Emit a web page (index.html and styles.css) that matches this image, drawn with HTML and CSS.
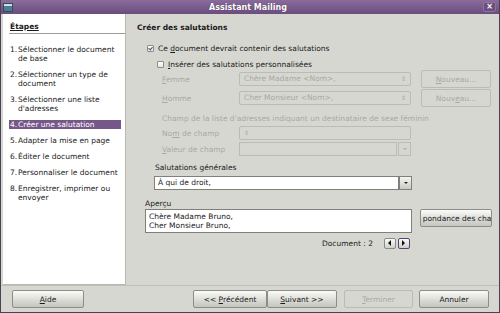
FILE: index.html
```html
<!DOCTYPE html>
<html lang="fr">
<head>
    <meta charset="UTF-8">
    <title>Assistant Mailing</title>
    <link rel="stylesheet" href="styles.css">
</head>
<body>
    <div class="window">
        <!-- Title bar -->
        <div class="titlebar">
            <span class="app-icon"></span>
            <span class="title">Assistant Mailing</span>
            <span class="close">×</span>
        </div>

        <div class="main">
            <!-- Steps -->
            <div class="steps">
                <div class="steps-title"><u>É</u>tapes</div>
                <ol class="step-list">
                    <li><span class="num">1.</span><span>Sélectionner le document de base</span></li>
                    <li><span class="num">2.</span><span>Sélectionner un type de document</span></li>
                    <li><span class="num">3.</span><span>Sélectionner une liste d'adresses</span></li>
                    <li class="active"><span class="num">4.</span><span>Créer une salutation</span></li>
                    <li><span class="num">5.</span><span>Adapter la mise en page</span></li>
                    <li><span class="num">6.</span><span>Éditer le document</span></li>
                    <li><span class="num">7.</span><span>Personnaliser le document</span></li>
                    <li><span class="num">8.</span><span>Enregistrer, imprimer ou envoyer</span></li>
                </ol>
            </div>

            <!-- Page content -->
            <div class="page">
                <h1>Créer des salutations</h1>

                <div class="check-row first">
                    <span class="check checked"></span>
                    <span>Ce <u>d</u>ocument devrait contenir des salutations</span>
                </div>
                <div class="check-row second">
                    <span class="check"></span>
                    <span><u>I</u>nsérer des salutations personnalisées</span>
                </div>

                <div class="field-row gender">
                    <span class="field-label"><u>F</u>emme</span>
                    <div class="combo disabled">Chère Madame &lt;Nom&gt;,<span class="spin">⇕</span></div>
                    <div class="btn disabled new-btn"><span><u>N</u>ouveau...</span></div>
                </div>
                <div class="field-row gender">
                    <span class="field-label"><u>H</u>omme</span>
                    <div class="combo disabled">Cher Monsieur &lt;Nom&gt;,<span class="spin">⇕</span></div>
                    <div class="btn disabled new-btn"><span>Nouv<u>e</u>au...</span></div>
                </div>

                <div class="hint">Champ de la liste d'adresses indiquant un destinataire de sexe féminin</div>

                <div class="field-row small">
                    <span class="field-label">No<u>m</u> de champ</span>
                    <div class="combo disabled"><span class="spin">⇕</span></div>
                </div>
                <div class="field-row small">
                    <span class="field-label"><u>V</u>aleur de champ</span>
                    <div class="combo-edit disabled">
                        <div class="edit"></div>
                        <div class="drop"><span class="arrow"></span></div>
                    </div>
                </div>

                <div class="group-label">Salutations générales</div>
                <div class="combo-edit general">
                    <div class="edit">À qui de droit,</div>
                    <div class="drop"><span class="arrow"></span></div>
                </div>

                <div class="preview-label">Aperçu</div>
                <div class="preview-row">
                    <div class="preview">Chère Madame Bruno,<br>Cher Monsieur Bruno,</div>
                    <div class="btn match-btn">pondance des cha</div>
                </div>

                <div class="doc-row">
                    <span class="doc-label">Document : 2</span>
                    <span class="nav-btn"><span class="tri left"></span></span>
                    <span class="nav-btn focus"><span class="tri right"></span></span>
                </div>
            </div>
        </div>

        <!-- Footer buttons -->
        <div class="footer">
            <div class="btn help"><span><u>A</u>ide</span></div>
            <div class="nav-group">
                <div class="btn prev"><span>&lt;&lt; <u>P</u>récédent</span></div>
                <div class="btn next"><span><u>S</u>uivant &gt;&gt;</span></div>
            </div>
            <div class="btn disabled finish"><span><u>T</u>erminer</span></div>
            <div class="btn cancel">Annuler</div>
        </div>
    </div>
</body>
</html>
```

FILE: styles.css
```css
:root {
    --bg: #d7d7d1;
    --purple: #76578a;
    --purple-dark: #5d4470;
    --text: #1a1a1a;
    --disabled: #a9a9a3;
    --border: #8f8f8a;
}

* {
    margin: 0;
    padding: 0;
    box-sizing: border-box;
}

body {
    font-family: "DejaVu Sans", sans-serif;
    font-size: 7.5px;
    color: var(--text);
    background: #fff;
}

u {
    text-decoration: underline;
}

.window {
    width: 500px;
    height: 313px;
    background: var(--bg);
    border: 1px solid #4d4052;
    border-top: none;
    display: flex;
    flex-direction: column;
}

/* Title bar */
.titlebar {
    height: 14px;
    background: linear-gradient(#8a6c9c, #6a4d7d);
    display: flex;
    align-items: center;
    padding: 0 3px 0 2px;
    color: #fff;
    font-weight: bold;
    font-size: 8px;
}

.app-icon {
    width: 10px;
    height: 9px;
    background: linear-gradient(#cfe0e8 0 30%, #4f7c92 30%);
    border: 1px solid #344c58;
}

.title {
    flex: 1;
    text-align: center;
    text-shadow: 0 0 1px #3a2a44;
}

.close {
    width: 13px;
    height: 10px;
    border: 1px solid #8d73a0;
    border-radius: 2px;
    background: #6b4f7e;
    font-size: 8px;
    line-height: 8px;
    text-align: center;
}

/* Main area */
.main {
    flex: 1;
    display: flex;
    padding: 0 0 0 2px;
}

.steps {
    width: 123px;
    height: 271px;
    background: #fff;
    border-right: 1px solid #b9b9b3;
    border-bottom: 1px solid #b9b9b3;
    padding: 8px 0 0 6px;
}

.steps-title {
    font-weight: bold;
    line-height: 10px;
    padding-left: 1px;
    border-bottom: 1px solid #9c9c98;
    padding-bottom: 1px;
    margin-bottom: 11px;
    text-decoration: underline;
}

.step-list {
    list-style: none;
    display: flex;
    flex-direction: column;
    gap: 7px;
    padding-right: 4px;
}

.step-list li {
    display: flex;
    line-height: 9px;
    padding-left: 1px;
}

.step-list .num {
    width: 8px;
    flex-shrink: 0;
}

.step-list li.active {
    background: var(--purple);
    color: #fff;
    height: 9px;
}

/* Page content */
.page {
    flex: 1;
    padding: 9px 0 0 11px;
    display: flex;
    flex-direction: column;
}

h1 {
    font-size: 7.5px;
    font-weight: bold;
    line-height: 9px;
    margin-bottom: 12px;
}

.check-row {
    display: flex;
    align-items: center;
    gap: 4px;
    height: 9px;
    margin-bottom: 7px;
}

.check-row.first {
    padding-left: 10px;
}

.check-row.second {
    padding-left: 20px;
    margin-bottom: 1px;
}

.check {
    width: 7px;
    height: 7px;
    border: 1px solid #8c8c88;
    background: linear-gradient(#fff, #e6e6e2);
    border-radius: 1px;
    position: relative;
}

.check.checked::after {
    content: "";
    position: absolute;
    left: 1px;
    top: 0;
    width: 2px;
    height: 3px;
    border: solid var(--purple-dark);
    border-width: 0 1px 1px 0;
    transform: rotate(40deg);
}

.field-row {
    display: flex;
    align-items: center;
    padding-left: 25px;
}

.field-row.gender {
    height: 18px;
    margin-bottom: 1px;
}

.field-row.small {
    height: 14px;
    margin-bottom: 2px;
}

.field-label {
    width: 77px;
    color: var(--disabled);
}

.combo {
    width: 172px;
    height: 14px;
    border: 1px solid #bcbcb6;
    border-radius: 2px;
    padding-left: 4px;
    line-height: 12px;
    color: var(--disabled);
    display: flex;
    justify-content: space-between;
}

.spin {
    font-size: 6px;
    padding-right: 4px;
}

.new-btn {
    width: 70px;
    margin-left: 10px;
}

.hint {
    color: var(--disabled);
    padding-left: 25px;
    line-height: 9px;
    margin: 6px 0 3px;
}

.combo-edit {
    width: 172px;
    height: 14px;
    display: flex;
}

.combo-edit .edit {
    flex: 1;
    border: 1px solid #bcbcb6;
    padding-left: 3px;
    line-height: 12px;
}

.combo-edit .drop {
    width: 13px;
    border: 1px solid #bcbcb6;
    margin-left: 1px;
    display: flex;
    align-items: center;
    justify-content: center;
}

.arrow {
    width: 0;
    height: 0;
    border-left: 2px solid transparent;
    border-right: 2px solid transparent;
    border-top: 2px solid #b0b0aa;
}

.group-label {
    line-height: 9px;
    margin: 5px 0 4px 18px;
}

.combo-edit.general {
    width: 258px;
    margin-left: 17px;
}

.combo-edit.general .edit {
    background: #fff;
    border-color: #7f7f7b;
}

.combo-edit.general .drop {
    margin-left: 0;
    border-color: #7f7f7b;
    background: linear-gradient(#f4f4f2, #c9c9c4);
}

.combo-edit.general .arrow {
    border-top-color: #222;
}

.preview-label {
    line-height: 9px;
    margin: 9px 0 1px 8px;
}

.preview-row {
    display: flex;
    align-items: flex-start;
    padding-left: 8px;
}

.preview {
    width: 267px;
    height: 24px;
    background: #fff;
    border: 1px solid #7f7f7b;
    padding: 2px 3px;
    line-height: 9px;
}

.match-btn {
    width: 72px;
    height: 17px;
    margin-left: 8px;
    overflow: hidden;
    white-space: nowrap;
    justify-content: flex-start;
    padding-left: 2px;
}

.doc-row {
    display: flex;
    align-items: center;
    margin: 4px 0 0 185px;
    height: 12px;
    gap: 2px;
}

.doc-label {
    margin-right: 9px;
}

.nav-btn {
    width: 12px;
    height: 11px;
    border: 1px solid #8a8a86;
    border-radius: 2px;
    background: linear-gradient(#fafaf8, #cfcfca);
    display: flex;
    align-items: center;
    justify-content: center;
}

.nav-btn.focus {
    border-color: var(--purple-dark);
}

.tri {
    width: 0;
    height: 0;
    border-top: 3px solid transparent;
    border-bottom: 3px solid transparent;
}

.tri.left {
    border-right: 3px solid #111;
}

.tri.right {
    border-left: 3px solid #111;
}

/* Buttons */
.btn {
    height: 18px;
    border: 1px solid #8d8d88;
    border-radius: 2px;
    background: linear-gradient(#fbfbfa, #d9d9d4 60%, #c6c6c0);
    display: flex;
    align-items: center;
    justify-content: center;
}

.btn.disabled {
    background: var(--bg);
    border-color: #bcbcb6;
    color: var(--disabled);
}

.footer {
    height: 27px;
    border-top: 1px solid #c0c0ba;
    display: flex;
    align-items: center;
    padding: 1px 10px 1px 11px;
}

.footer .help {
    width: 72px;
    margin-right: auto;
}

.nav-group {
    display: flex;
    margin-right: 7px;
}

.footer .prev {
    width: 74px;
}

.footer .next {
    width: 70px;
}

.footer .finish {
    width: 69px;
    margin-right: 6px;
}

.footer .cancel {
    width: 70px;
}
```
